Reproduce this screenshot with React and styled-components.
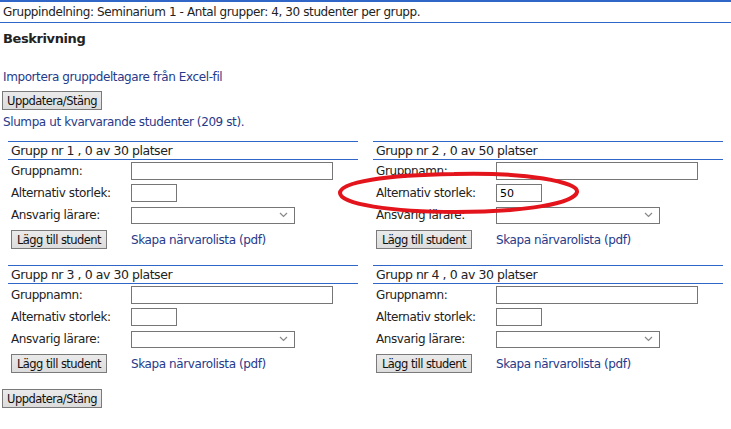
import styled, { createGlobalStyle } from 'styled-components'

const GlobalStyle = createGlobalStyle`
  body {
    margin: 0;
    background: #fff;
    font-family: "DejaVu Sans", Verdana, sans-serif;
    font-size: 12px;
    letter-spacing: -0.4px;
    color: #222;
  }
`

const blue = '#2f66c8'
const link = '#263a8a'

const Page = styled.div`
  position: relative;
  width: 731px;
  height: 429px;
  overflow: hidden;
`

const TopBar = styled.div`
  border-top: 2px solid ${blue};
  border-bottom: 1px solid ${blue};
  height: 20px;
  line-height: 20px;
  padding-left: 3px;
`

const Content = styled.div`
  padding-left: 3px;
`

const Heading = styled.h3`
  margin: 0;
  padding-top: 6px;
  height: 20px;
  line-height: 20px;
  font-size: 13px;
  font-weight: bold;
`

const Link = styled.a`
  color: ${link};
  text-decoration: none;
  line-height: 16px;
  display: ${({ $block }) => ($block ? 'block' : 'inline')};
  margin-top: ${({ $mt }) => $mt || 0}px;
`

const Button = styled.button`
  font-family: "DejaVu Sans", Verdana, sans-serif;
  font-size: 11.5px;
  letter-spacing: -0.55px;
  white-space: nowrap;
  color: #111;
  width: ${({ $w }) => $w || 100}px;
  height: 19px;
  padding: 0;
  border: 1px solid #7a7a7a;
  background: linear-gradient(#eaeaea, #dcdcdc);
  border-radius: 0;
  margin: ${({ $m }) => $m || '0'};
  display: block;
`

const Groups = styled.div`
  display: grid;
  grid-template-columns: 350px 350px;
  column-gap: 15px;
  margin: 11px 0 0 5px;
`

const Group = styled.div`
  height: 124px;
`

const GroupHead = styled.div`
  border-top: 1px solid ${blue};
  border-bottom: 1px solid ${blue};
  height: 17px;
  line-height: 17px;
  padding-left: 3px;
  font-size: 12.5px;
  letter-spacing: -0.45px;
`

const Row = styled.div`
  display: flex;
  align-items: center;
  height: 22px;
  padding-left: 3px;
`

const Label = styled.span`
  width: 120px;
  flex: none;
`

const Input = styled.input`
  box-sizing: border-box;
  width: ${({ $w }) => $w}px;
  height: 18px;
  border: 1px solid #767676;
  padding: 0 3px;
  font-family: "DejaVu Sans", Verdana, sans-serif;
  font-size: 11px;
  color: #000;
  outline: none;
`

const Select = styled.div`
  box-sizing: border-box;
  width: 164px;
  height: 17px;
  border: 1px solid #767676;
  display: flex;
  justify-content: flex-end;
  align-items: center;
  padding-right: 6px;
`

const Actions = styled.div`
  display: flex;
  align-items: center;
  padding-left: 3px;
  margin-top: 4px;
`

const Annotation = styled.svg`
  position: absolute;
  left: 336px;
  top: 170px;
  pointer-events: none;
`

function Chevron() {
  return (
    <svg width="9" height="6" viewBox="0 0 9 6">
      <path d="M1 1 L4.5 4.5 L8 1" fill="none" stroke="#888" strokeWidth="1.2" />
    </svg>
  )
}

const groups = [
  { nr: 1, size: 30, alt: '' },
  { nr: 2, size: 50, alt: '50' },
  { nr: 3, size: 30, alt: '' },
  { nr: 4, size: 30, alt: '' },
]

export default function App() {
  return (
    <Page>
      <GlobalStyle />
      <TopBar>Gruppindelning: Seminarium 1 - Antal grupper: 4, 30 studenter per grupp.</TopBar>
      <Content>
        <Heading>Beskrivning</Heading>
        <Link $block $mt={20} href="#">Importera gruppdeltagare från Excel-fil</Link>
        <Button $m="6px 0 0 -1px">Uppdatera/Stäng</Button>
        <Link $block $mt={4} href="#">Slumpa ut kvarvarande studenter (209 st).</Link>
        <Groups>
          {groups.map((g) => (
            <Group key={g.nr}>
              <GroupHead>Grupp nr {g.nr} , 0 av {g.size} platser</GroupHead>
              <Row>
                <Label>Gruppnamn:</Label>
                <Input $w={202} />
              </Row>
              <Row>
                <Label>Alternativ storlek:</Label>
                <Input $w={46} defaultValue={g.alt} />
              </Row>
              <Row>
                <Label>Ansvarig lärare:</Label>
                <Select>
                  <Chevron />
                </Select>
              </Row>
              <Actions>
                <Button $w={96} $m="0 24px 0 0">Lägg till student</Button>
                <Link href="#">Skapa närvarolista (pdf)</Link>
              </Actions>
            </Group>
          ))}
        </Groups>
        <Button $m="0 0 0 -1px">Uppdatera/Stäng</Button>
      </Content>
      <Annotation width="246" height="46" viewBox="0 0 246 46">
        <path
          d="M118 4 C 190 2, 243 12, 241 22 C 239 33, 190 42, 120 42 C 55 42, 4 34, 4 23 C 4 12, 50 5, 118 4"
          fill="none"
          stroke="#e3141b"
          strokeWidth="4"
        />
      </Annotation>
    </Page>
  )
}
